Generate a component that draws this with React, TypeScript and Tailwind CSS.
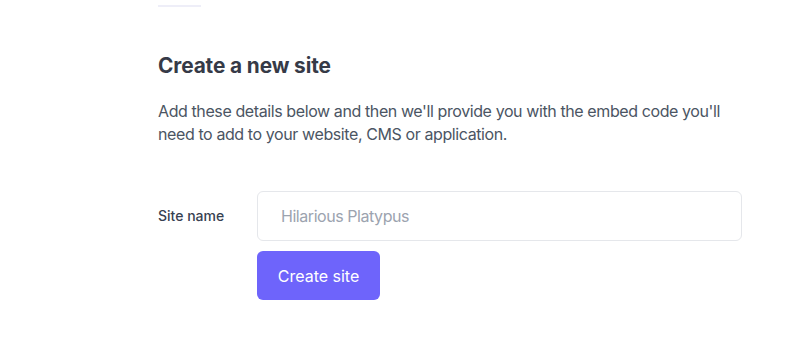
import { FC } from "react";

const App: FC = () => {
  return (
    <div className="min-h-screen bg-white font-['Inter',sans-serif]">
      <div className="pl-[158px] w-[742px]">
        <div className="pt-[5px] h-[7px]">
          <div className="w-[43px] h-[2px] bg-[#eeeef8]" />
        </div>
        <h1 className="mt-[45px] text-[20.8px] leading-7 font-bold tracking-[-0.1px] text-[#363a47]">
          Create a new site
        </h1>
        <p className="mt-[20px] text-base leading-[23px] tracking-[-0.4px] text-[#4b5563]">
          Add these details below and then we'll provide you with the embed
          code you'll need to add to your website, CMS or application.
        </p>
        <div className="mt-[45px] flex">
          <label className="w-[99px] h-[50px] flex items-center text-sm font-medium text-[#374151]">
            Site name
          </label>
          <div className="flex-1 flex flex-col gap-[10px]">
            <input
              type="text"
              placeholder="Hilarious Platypus"
              className="h-[50px] w-full rounded-md border border-[#e5e7eb] px-[23px] text-base tracking-[-0.45px] text-[#374151] placeholder:text-[#9ca3af] outline-none"
            />
            <div>
              <button className="h-[49px] w-[123px] rounded-md bg-[#6e64fb] text-base text-white">
                Create site
              </button>
            </div>
          </div>
        </div>
      </div>
    </div>
  );
};

export default App;
